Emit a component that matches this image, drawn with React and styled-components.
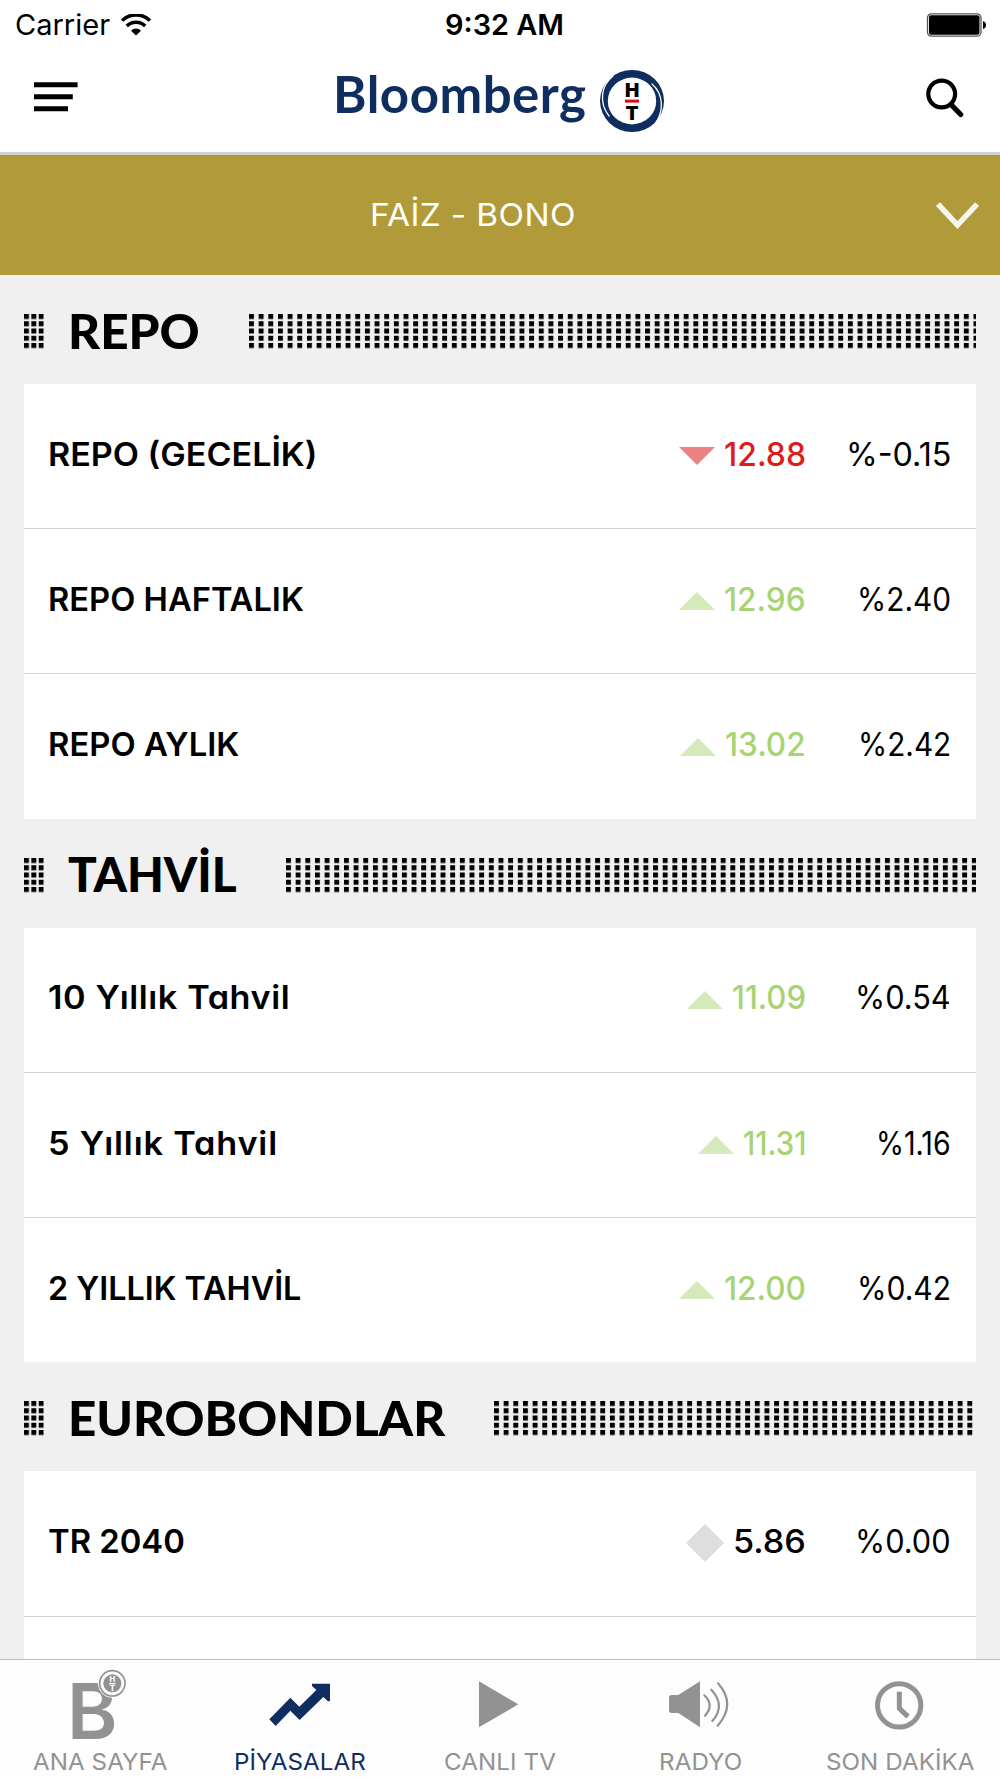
import React, { useLayoutEffect, useRef, useState } from "react";
import styled, { createGlobalStyle } from "styled-components";

const GlobalStyle = createGlobalStyle`
  * {
    box-sizing: border-box;
  }

  body {
    margin: 0;
    background: #f0f0f0;
    color: #000;
    font-family: "Inter", "Liberation Sans", sans-serif;
  }

  svg {
    display: block;
  }
`;

const Screen = styled.div`
  width: 1000px;
  height: 1778px;
  display: flex;
  flex-direction: column;
  overflow: hidden;
`;

const Header = styled.header`
  flex: none;
  height: 155px;
  background: #fff;
  border-bottom: 3px solid #d2d2d2;
`;

const StatusBar = styled.div`
  height: 50px;
  display: grid;
  grid-template-columns: 1fr auto 1fr;
  align-items: center;
  padding: 0 14px 0 15px;
  font-size: 28.4px;
  line-height: 48px;
`;

const Carrier = styled.div`
  display: flex;
  align-items: center;
  gap: 11px;
`;

const StatusText = styled.div`
  font-weight: ${(p) => (p.$strong ? 600 : 400)};
`;

const Clock = styled.div`
  padding-left: 8px;
`;

const Battery = styled.svg`
  justify-self: end;
`;

const NavBar = styled.div`
  height: 102px;
  display: flex;
  align-items: center;
  justify-content: space-between;
  padding: 0 36px 0 34px;
`;

const NavIcon = styled.svg`
  margin-bottom: ${(p) => p.$lift}px;
`;

const Picker = styled.div`
  flex: none;
  height: 120px;
  display: flex;
  align-items: center;
  justify-content: space-between;
  padding: 0 21px 0 370px;
  background: #b19a39;
  color: #fff;
  font-size: 31.5px;
  font-weight: 400;
`;

const PickerLabel = styled.div`
  padding-bottom: 2px;
`;

const Content = styled.main`
  flex: 1;
  min-height: 0;
  overflow: hidden;
  padding: 0 24px;
`;

const SectionHead = styled.div`
  height: 109px;
  display: flex;
  align-items: center;
  padding-top: 4px;
`;

const Title = styled.h2`
  margin: -2px 48.5px 0 24px;
  font-family: "Lato", "Open Sans", sans-serif;
  font-size: 48px;
  font-weight: 900;
  line-height: 60px;
`;

const DotStrip = styled.svg`
  flex: 1;
  min-width: 0;
  height: 35px;
`;

const Card = styled.div`
  background: #fff;
`;

const Row = styled.div`
  height: 144.4px;
  display: flex;
  align-items: center;
  padding: 0 25px 0 24px;
  font-size: 32.3px;
  line-height: 44px;

  & + & {
    height: 145.1px;
    border-top: 1px solid #d2d2d2;
  }
`;

const Name = styled.div`
  flex: 1;
  padding-bottom: 3px;
  font-weight: 600;
  font-feature-settings: "cv11", "ss03";
`;

const Price = styled.div`
  display: flex;
  align-items: center;
  gap: 9.5px;
  font-weight: 500;
  color: ${(p) => p.$color};
`;

const Value = styled.div`
  padding-bottom: 3px;
`;

const Change = styled.div`
  width: 145px;
  display: flex;
  justify-content: flex-end;
  padding-bottom: 3px;
`;

const TabBar = styled.nav`
  flex: none;
  height: 119px;
  display: grid;
  grid-template-columns: repeat(5, 200px);
  background: #fdfdfd;
  border-top: 1px solid #bdbdbd;
`;

const Tab = styled.div`
  display: flex;
  flex-direction: column;
  align-items: center;
  color: ${(p) => (p.$active ? "#0f2e5f" : "#929292")};
  font-size: 22.8px;
  line-height: 35px;
`;

const TabIcon = styled.svg`
  overflow: visible;
`;

const FitBox = styled.span`
  display: block;
  width: ${(p) => p.$width}px;
  white-space: nowrap;
`;

const FitInner = styled.span`
  display: inline-block;
  transform-origin: 0 50%;
`;

// Sets a text to an exact width: scales it a little, then tracks out what is left
const Fit = ({ width, children }) => {
  const ref = useRef(null);
  const [style, setStyle] = useState({});

  useLayoutEffect(() => {
    const natural = ref.current.offsetWidth;
    const scale = Math.min(width / natural, 1.06);
    const gaps = children.length - 1;
    setStyle({
      transform: `scaleX(${scale})`,
      letterSpacing: `${(width / scale - natural) / gaps}px`,
    });
  }, []);

  return (
    <FitBox $width={width}>
      <FitInner ref={ref} style={style}>
        {children}
      </FitInner>
    </FitBox>
  );
};

const trends = {
  down: { color: "#dc1c1c", fill: "#ec8383", points: "0,0 36,0 18,18", w: 36, h: 18 },
  up: { color: "#a8d373", fill: "#d5eaba", points: "0,18 36,18 18,0", w: 36, h: 18 },
  flat: { color: "#000", fill: "#dedede", points: "19,0 38,19 19,38 0,19", w: 38, h: 38 },
};

const sections = [
  {
    title: "REPO",
    width: 132,
    rows: [
      { name: "REPO (GECELİK)", w: 270, trend: "down", value: "12.88", vw: 82, change: "%-0.15", cw: 105 },
      { name: "REPO HAFTALIK", w: 256, trend: "up", value: "12.96", vw: 82, change: "%2.40", cw: 94 },
      { name: "REPO AYLIK", w: 191, trend: "up", value: "13.02", vw: 81, change: "%2.42", cw: 93 },
    ],
  },
  {
    title: "TAHVİL",
    width: 169,
    rows: [
      { name: "10 Yıllık Tahvil", w: 242, trend: "up", value: "11.09", vw: 74, change: "%0.54", cw: 96 },
      { name: "5 Yıllık Tahvil", w: 229, trend: "up", value: "11.31", vw: 63, change: "%1.16", cw: 75 },
      { name: "2 YILLIK TAHVİL", w: 253, trend: "up", value: "12.00", vw: 82, change: "%0.42", cw: 94 },
    ],
  },
  {
    title: "EUROBONDLAR",
    width: 377,
    rows: [
      { name: "TR 2040", w: 137, trend: "flat", value: "5.86", vw: 73, change: "%0.00", cw: 96 },
      { name: "", w: 0 },
    ],
  },
];

const DotRows = ({ id, pitch }) => (
  <>
    <defs>
      <pattern id={id} x="0" y="0" width={pitch} height="7.25" patternUnits="userSpaceOnUse">
        <rect width="4.9" height="5" />
      </pattern>
    </defs>
    <rect width="100%" height="35" fill={`url(#${id})`} />
  </>
);

const Menu = () => (
  <NavIcon $lift={8} width="44" height="30" viewBox="0 0 44 30">
    <path d="M0 0.2h43.6v5H0zM0 12.2h38.8v5H0zM0 24.2h34v5H0z" />
  </NavIcon>
);

const Logo = () => (
  <svg width="338" height="80" viewBox="-4 -7 338 80">
    <text
      x="-4"
      y="45.2"
      fill="#0f2e5f"
      fontFamily="Lato, sans-serif"
      fontWeight="700"
      fontSize="51"
      textLength="253"
    >
      Bloomberg
    </text>
    <ellipse cx="295" cy="33" rx="32" ry="31" fill="#0f2e5f" />
    <ellipse cx="295" cy="33" rx="24.2" ry="23.4" fill="#fff" />
    <g fill="none" stroke="#fff" strokeWidth="1.3" strokeLinecap="round">
      <path d="M276 8C263.500 18 262 35 272 48" />
      <path d="M315 16C326.500 26 327.500 43 317.500 57" />
    </g>
    <g fontFamily="Inter, sans-serif" fontWeight="900" fontSize="19" textAnchor="middle">
      <text x="295" y="28.600">H</text>
      <text x="295" y="52.300">T</text>
    </g>
    <rect x="288" y="31.600" width="14" height="3" fill="#e30613" />
  </svg>
);

const Search = () => (
  <NavIcon $lift={6} width="38" height="40" viewBox="0 0 38 40" fill="none" stroke="#000">
    <circle cx="15.700" cy="16" r="13.400" strokeWidth="4.200" />
    <path d="M25 26.500L34.700 36.500" strokeWidth="5.200" strokeLinecap="round" />
  </NavIcon>
);

const Wifi = () => (
  <svg width="30" height="22" viewBox="0 0 30 22">
    <g fill="none" stroke="#000" strokeWidth="3.500">
      <path d="M1 6.600A20 20 0 0 1 29 6.600" />
      <path d="M5.800 12A13 13 0 0 1 24.200 12" />
    </g>
    <path d="M15 21.600L10 16.700A7 7 0 0 1 20 16.700z" />
  </svg>
);

const tabs = [
  {
    label: "ANA SAYFA",
    width: 134,
    viewBox: "0 60 600 252",
    icon: (
      <>
        <text x="201" y="296" fontFamily="Inter, sans-serif" fontWeight="600" fontSize="230">
          B
        </text>
        <circle cx="337" cy="130" r="43" fill="#fdfdfd" />
        <circle cx="337" cy="130" r="38" fill="none" stroke="currentColor" strokeWidth="5" />
        <circle cx="337" cy="130" r="27" />
        <g fill="#fdfdfd" fontFamily="Inter, sans-serif" fontWeight="800" fontSize="23" textAnchor="middle">
          <text x="337" y="125">H</text>
          <text x="337" y="152">T</text>
        </g>
        <path d="M327 129h20v4h-20z" fill="#fdfdfd" />
      </>
    ),
  },
  {
    label: "PİYASALAR",
    width: 132,
    active: true,
    viewBox: "600 60 600 252",
    icon: (
      <path d="M808 238L871 173L898 200L949 150L936 138V131H990V184L984 184L970 171L899 240L871 212L827 258z" />
    ),
  },
  {
    label: "CANLI TV",
    width: 112,
    viewBox: "0 60 600 252",
    icon: <path d="M237 124L355 193L237 262z" />,
  },
  {
    label: "RADYO",
    width: 83,
    viewBox: "600 60 600 252",
    icon: (
      <>
        <path d="M815 165H835L900 124V262L835 219H815Q807 219 807 211V173Q807 165 815 165z" />
        <g fill="none" stroke="currentColor" strokeWidth="6.500" strokeLinecap="round">
          <path d="M913 166Q944 196 915 227" />
          <path d="M934 149Q978 196 937 243" />
          <path d="M954 130Q1010 193 953 257" />
        </g>
      </>
    ),
  },
  {
    label: "SON DAKİKA",
    width: 149,
    viewBox: "150 60 600 252",
    icon: (
      <g fill="none" stroke="currentColor" strokeWidth="15">
        <circle cx="447.500" cy="196" r="65" />
        <path d="M448 155V205L474 230" />
      </g>
    ),
  },
];

const App = () => {
  return (
    <Screen>
      <GlobalStyle />
      <Header>
        <StatusBar>
          <Carrier>
            <StatusText>
              <Fit width={95}>Carrier</Fit>
            </StatusText>
            <Wifi />
          </Carrier>
          <Clock>
            <StatusText $strong>
              <Fit width={119}>9:32 AM</Fit>
            </StatusText>
          </Clock>
          <Battery width="60" height="24" viewBox="0 0 60 24">
            <rect x="1.500" y="0.800" width="53.500" height="22.400" rx="4" fill="#fff" stroke="#555" strokeWidth="1.300" />
            <rect x="3" y="2.300" width="50.500" height="19.400" rx="2" />
            <path d="M57 8Q60 9 60 12T57 16z" />
          </Battery>
        </StatusBar>
        <NavBar>
          <Menu />
          <Logo />
          <Search />
        </NavBar>
      </Header>
      <Picker>
        <PickerLabel>
          <Fit width={205}>FAİZ - BONO</Fit>
        </PickerLabel>
        <svg width="43" height="27" viewBox="0 0 43 27" fill="none" stroke="#f8f6ec" strokeWidth="5.500">
          <path d="M2 2L21.500 23L41 2" />
        </svg>
      </Picker>
      <Content>
        {sections.map((section) => (
          <section key={section.title}>
            <SectionHead>
              <svg width="20" height="35">
                <DotRows id={`${section.title}-start`} pitch={7.35} />
              </svg>
              <Title>
                <Fit width={section.width}>{section.title}</Fit>
              </Title>
              <DotStrip>
                <DotRows id={`${section.title}-end`} pitch={9.66} />
              </DotStrip>
            </SectionHead>
            <Card>
              {section.rows.map((row) => {
                const trend = trends[row.trend];
                return (
                  <Row key={row.name}>
                    {trend && (
                      <>
                        <Name>
                          <Fit width={row.w}>{row.name}</Fit>
                        </Name>
                        <Price $color={trend.color}>
                          <svg width={trend.w} height={trend.h}>
                            <polygon points={trend.points} fill={trend.fill} />
                          </svg>
                          <Value>
                            <Fit width={row.vw}>{row.value}</Fit>
                          </Value>
                        </Price>
                        <Change>
                          <Fit width={row.cw}>{row.change}</Fit>
                        </Change>
                      </>
                    )}
                  </Row>
                );
              })}
            </Card>
          </section>
        ))}
      </Content>
      <TabBar>
        {tabs.map((tab) => (
          <Tab key={tab.label} $active={tab.active}>
            <TabIcon width="200" height="84" viewBox={tab.viewBox} fill="currentColor">
              {tab.icon}
            </TabIcon>
            <Fit width={tab.width}>{tab.label}</Fit>
          </Tab>
        ))}
      </TabBar>
    </Screen>
  );
};

export default App;
